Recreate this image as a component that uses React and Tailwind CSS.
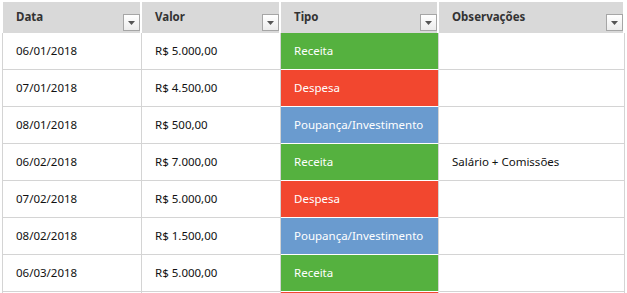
import React from "react";

const rows = [
  ["06/01/2018", "R$ 5.000,00", "Receita", ""],
  ["07/01/2018", "R$ 4.500,00", "Despesa", ""],
  ["08/01/2018", "R$ 500,00", "Poupança/Investimento", ""],
  ["06/02/2018", "R$ 7.000,00", "Receita", "Salário + Comissões"],
  ["07/02/2018", "R$ 5.000,00", "Despesa", ""],
  ["08/02/2018", "R$ 1.500,00", "Poupança/Investimento", ""],
  ["06/03/2018", "R$ 5.000,00", "Receita", ""],
];

const tipoBg = {
  Receita: "bg-[#55b13f]",
  Despesa: "bg-[#f2472f]",
  "Poupança/Investimento": "bg-[#6a9bcf]",
};

function Drop() {
  return (
    <div className="absolute right-0 bottom-[2px] w-[17px] h-[17px] border border-[#a6a6a6] bg-gradient-to-b from-white to-[#ececec] flex items-center justify-center">
      <svg width="7" height="4" viewBox="0 0 7 4">
        <path d="M0 0H7L3.5 4Z" fill="#555" />
      </svg>
    </div>
  );
}

const widths = ["w-[140px]", "w-[139px]", "w-[158px]", "w-[186px]"];
const heads = ["Data", "Valor", "Tipo", "Observações"];

export default function App() {
  return (
    <div
      className="w-[627px] h-[293px] bg-white overflow-hidden pt-[2px] pl-[2px] text-[11.5px]"
      style={{ fontFamily: '"Noto Sans", "Open Sans", sans-serif' }}
    >
      <div className="flex h-[31px]">
        {heads.map((h, i) => (
          <div
            key={h}
            className={`${widths[i]} ${i === 0 ? "pl-[1px]" : ""} pr-[2px] h-full`}
          >
            <div className="relative h-full bg-[#d9d9d9] pl-[13px] pt-[6px] font-bold text-[#333]">
              {h}
              <Drop />
            </div>
          </div>
        ))}
      </div>
      {rows.map((r, ri) => (
        <div key={ri} className="flex h-[37px]">
          {r.map((c, ci) => (
            <div
              key={ci}
              className={`${widths[ci]} h-full border-r border-b border-[#d4d4d4] ${ci === 0 ? "border-l" : ""} ${ci === 2 ? `${tipoBg[c]} text-white border-b-white` : "text-[#111]"} flex items-center pl-[13px]`}
            >
              {c}
            </div>
          ))}
        </div>
      ))}
      <div className="flex h-[37px]">
        <div className="w-[140px] h-full border-l border-r border-[#d4d4d4]" />
        <div className="w-[139px] h-full border-r border-[#d4d4d4]" />
        <div className="w-[158px] h-full border-r border-[#d4d4d4] bg-[#f2472f]" />
        <div className="w-[186px] h-full border-r border-[#d4d4d4]" />
      </div>
    </div>
  );
}
